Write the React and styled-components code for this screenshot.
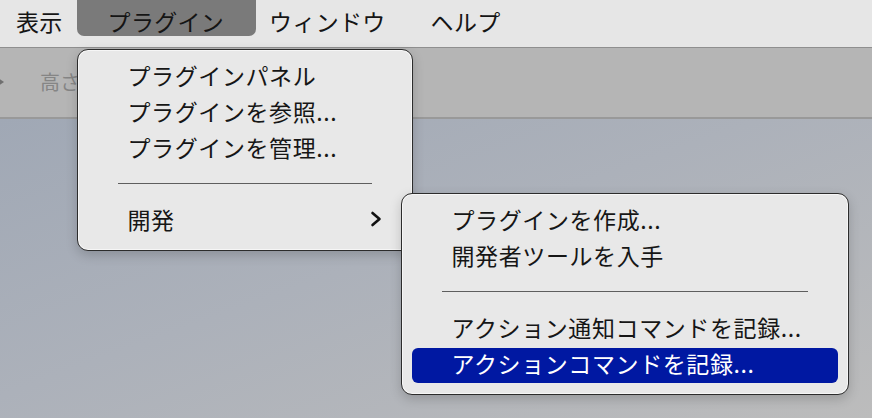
import React from "react";
import styled, { createGlobalStyle } from "styled-components";

const GlobalStyle = createGlobalStyle`
  html, body {
    margin: 0;
    padding: 0;
    overflow: hidden;
  }
  body {
    font-family: "Noto Sans CJK JP", "Noto Sans", sans-serif;
  }
`;

const Screen = styled.div`
  position: relative;
  width: 872px;
  height: 418px;
  display: flex;
  flex-direction: column;
  overflow: hidden;
  font-family: "Noto Sans CJK JP", "Noto Sans", sans-serif;
`;

const MenuBar = styled.div`
  height: 48px;
  flex-shrink: 0;
  display: flex;
  align-items: center;
  gap: 45px;
  padding: 0 0 4px 16px;
  box-sizing: border-box;
  background: #e6e6e6;
  border-bottom: 1px solid #8f8f8f;
`;

const MenuTitle = styled.div`
  position: relative;
  z-index: 0;
  font-size: 23px;
  line-height: 1;
  color: #151515;
  letter-spacing: 0.3px;

  &::before {
    content: "";
    display: ${({ $active }) => ($active ? "block" : "none")};
    position: absolute;
    z-index: -1;
    left: -31px;
    right: -32px;
    top: -20px;
    height: 46px;
    border-radius: 7px;
    background: #7a7a7a;
  }
`;

const Toolbar = styled.div`
  height: 71px;
  flex-shrink: 0;
  display: flex;
  align-items: center;
  gap: 35px;
  padding-bottom: 2px;
  background: #b5b5b5;
  border-bottom: 2px solid #999999;
  box-sizing: border-box;
`;

const ToolLabel = styled.span`
  font-size: 20px;
  color: #858585;
`;

const Desktop = styled.div`
  flex: 1;
  background: linear-gradient(160deg, #a0a8b5 0%, #acb1ba 45%, #bcbcbc 100%);
`;

const Menu = styled.div`
  position: absolute;
  left: ${({ $left }) => $left}px;
  top: ${({ $top }) => $top}px;
  width: ${({ $width }) => $width}px;
  box-sizing: border-box;
  padding: 8.5px 0 11px;
  background: #e8e8e8;
  border: 1.5px solid #2c2c2c;
  border-radius: 11px;
  box-shadow: inset 0 0 0 1px #f6f6f6, 0 4px 12px rgba(0, 0, 0, 0.18);
`;

const Item = styled.div`
  height: ${({ $selected }) => ($selected ? 35 : 36)}px;
  box-sizing: border-box;
  margin: ${({ $selected }) => ($selected ? "1px 10px 0" : "0")};
  padding: 0 30px 4px ${({ $selected }) => ($selected ? 39.5 : 49.5)}px;
  display: flex;
  align-items: center;
  justify-content: space-between;
  font-size: 23px;
  letter-spacing: 0.6px;
  color: ${({ $selected }) => ($selected ? "#ffffff" : "#161616")};
  background: ${({ $selected }) => ($selected ? "#0018a2" : "transparent")};
  border-radius: 6px;
  white-space: nowrap;
`;

const Separator = styled.div`
  height: 36px;
  box-sizing: border-box;
  padding: 16px 40px 0;

  &::after {
    content: "";
    display: block;
    height: 1.5px;
    background: #5e5e5e;
  }
`;

const Chevron = () => (
  <svg width="12" height="16" viewBox="0 0 12 16">
    <polyline
      points="2.5,2 9.5,8 2.5,14"
      fill="none"
      stroke="#111"
      strokeWidth="2.6"
      strokeLinecap="round"
      strokeLinejoin="round"
    />
  </svg>
);

const Caret = () => (
  <svg width="8" height="12" viewBox="0 0 8 12" style={{ marginLeft: -3 }}>
    <polygon points="0,1 7,6 0,11" fill="#6f6f6f" />
  </svg>
);

export default function App() {
  return (
    <Screen>
      <GlobalStyle />
      <MenuBar>
        <MenuTitle>表示</MenuTitle>
        <MenuTitle $active>プラグイン</MenuTitle>
        <MenuTitle>ウィンドウ</MenuTitle>
        <MenuTitle>ヘルプ</MenuTitle>
      </MenuBar>
      <Toolbar>
        <Caret />
        <ToolLabel>高さ</ToolLabel>
      </Toolbar>
      <Desktop />

      <Menu $left={77} $top={49} $width={336}>
        <Item>プラグインパネル</Item>
        <Item>プラグインを参照...</Item>
        <Item>プラグインを管理...</Item>
        <Separator />
        <Item>
          開発
          <Chevron />
        </Item>
      </Menu>

      <Menu $left={401} $top={193} $width={448}>
        <Item>プラグインを作成...</Item>
        <Item>開発者ツールを入手</Item>
        <Separator />
        <Item>アクション通知コマンドを記録...</Item>
        <Item $selected>アクションコマンドを記録...</Item>
      </Menu>
    </Screen>
  );
}
